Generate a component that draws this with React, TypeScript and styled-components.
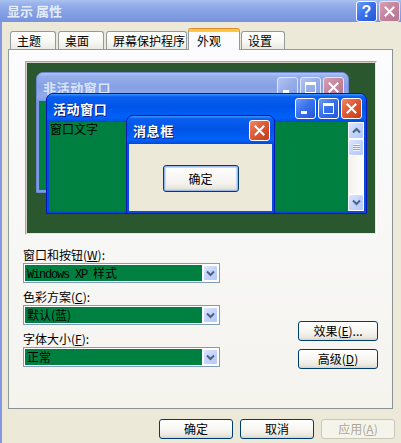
import React from 'react';
import styled, { createGlobalStyle } from 'styled-components';

const FONT = `"Noto Sans CJK SC", "Liberation Sans", sans-serif`;

const GlobalStyle = createGlobalStyle`
  html, body {
    margin: 0;
    padding: 0;
    background: #ece9d8;
    overflow: hidden;
  }
  body {
    font-family: ${FONT};
    font-size: 12px;
    color: #000;
  }
`;

type Kind = 'close' | 'min' | 'max' | 'help';

function Glyph({ kind }: { kind: Kind }) {
  if (kind === 'close')
    return (
      <svg width="13" height="13" viewBox="0 0 13 13">
        <path d="M2.5 2.5L10.5 10.5M10.5 2.5L2.5 10.5" stroke="#fff" strokeWidth="2" strokeLinecap="square" />
      </svg>
    );
  if (kind === 'min')
    return (
      <svg width="15" height="15" viewBox="0 0 15 15">
        <rect x="3" y="10" width="6" height="3" fill="#fff" />
      </svg>
    );
  if (kind === 'max')
    return (
      <svg width="15" height="15" viewBox="0 0 15 15">
        <rect x="2.5" y="2.5" width="10" height="10" fill="none" stroke="#fff" />
        <rect x="2" y="2" width="11" height="3" fill="#fff" />
      </svg>
    );
  return <HelpMark>?</HelpMark>;
}

function Chevron({ up }: { up?: boolean }) {
  return (
    <svg width="9" height="7" viewBox="0 0 9 7">
      <path
        d={up ? 'M1 5.5L4.5 2L8 5.5' : 'M1 1.5L4.5 5L8 1.5'}
        stroke="#4d6185"
        strokeWidth="2"
        fill="none"
      />
    </svg>
  );
}

function Preview() {
  return (
    <PreviewBox>
      <Win $x={9} $y={9} $w={313} $h={121}>
        <Caption>
          <CaptionText>非活动窗口</CaptionText>
          <CapButton $kind="min"><Glyph kind="min" /></CapButton>
          <CapButton $kind="max"><Glyph kind="max" /></CapButton>
          <CapButton $kind="close"><Glyph kind="close" /></CapButton>
        </Caption>
        <Client $bg="#008040" />
      </Win>

      <Win $x={19} $y={30} $w={321} $h={121} $active>
        <Caption $active>
          <CaptionText $active>活动窗口</CaptionText>
          <CapButton $kind="min" $active><Glyph kind="min" /></CapButton>
          <CapButton $kind="max" $active><Glyph kind="max" /></CapButton>
          <CapButton $kind="close" $active><Glyph kind="close" /></CapButton>
        </Caption>
        <Client $bg="#008040">
          <WindowText>窗口文字</WindowText>
          <ScrollBar>
            <ScrollBtn><Chevron up /></ScrollBtn>
            <ScrollThumb>
              <Grip />
            </ScrollThumb>
            <ScrollTrack />
            <ScrollBtn><Chevron /></ScrollBtn>
          </ScrollBar>
        </Client>
      </Win>

      <Win $x={99} $y={52} $w={149} $h={99} $active>
        <Caption $active>
          <CaptionText $active>消息框</CaptionText>
          <CapButton $kind="close" $active><Glyph kind="close" /></CapButton>
        </Caption>
        <Client $bg="#ece9d8" $center>
          <MsgButton>确定</MsgButton>
        </Client>
      </Win>
    </PreviewBox>
  );
}

function Combo({ children }: { children: React.ReactNode }) {
  return (
    <Select>
      <SelectValue>{children}</SelectValue>
      <DropBtn><Chevron /></DropBtn>
    </Select>
  );
}

export default function App() {
  return (
    <>
      <GlobalStyle />
      <Dialog>
        <TitleBar>
          <TitleText>显示 属性</TitleText>
          <TitleButtons>
            <CapButton $kind="help" $active><Glyph kind="help" /></CapButton>
            <CapButton $kind="close"><Glyph kind="close" /></CapButton>
          </TitleButtons>
        </TitleBar>

        <Body>
          <TabRow>
            <Tab $w={46}>主题</Tab>
            <Tab $w={46}>桌面</Tab>
            <Tab $w={81}>屏幕保护程序</Tab>
            <Tab $w={52} $selected>外观</Tab>
            <Tab $w={44}>设置</Tab>
          </TabRow>

          <Panel>
            <Preview />

            <Form>
              <Fields>
                <Field>
                  <Label>窗口和按钮(<u>W</u>):</Label>
                  <Combo><Latin>Windows XP </Latin>样式</Combo>
                </Field>
                <Field>
                  <Label>色彩方案(<u>C</u>):</Label>
                  <Combo>默认(蓝)</Combo>
                </Field>
                <Field>
                  <Label>字体大小(<u>F</u>):</Label>
                  <Combo>正常</Combo>
                </Field>
              </Fields>
              <SideButtons>
                <Button $w={80}>效果(<u>E</u>)...</Button>
                <Button $w={80}>高级(<u>D</u>)</Button>
              </SideButtons>
            </Form>
          </Panel>

          <Footer>
            <Button $w={74}>确定</Button>
            <Button $w={74}>取消</Button>
            <Button $w={74} disabled>应用(<u>A</u>)</Button>
          </Footer>
        </Body>
      </Dialog>
    </>
  );
}

const Dialog = styled.div`
  width: 401px;
  height: 443px;
  display: flex;
  flex-direction: column;
  background: #ece9d8;
  overflow: hidden;
`;

const TitleBar = styled.div`
  flex: none;
  height: 22px;
  display: flex;
  align-items: center;
  padding: 0 1px 0 7px;
  background: linear-gradient(#a9c2f0, #93ade9 25%, #809ce2 70%, #7893dc);
  color: #e4ecfb;
  font-weight: bold;
  font-size: 13px;
`;

const TitleText = styled.span`
  flex: 1;
  line-height: 22px;
  white-space: pre;
`;

const TitleButtons = styled.div`
  display: flex;
  gap: 2px;
`;

const HelpMark = styled.span`
  color: #fff;
  font: bold 16px "Liberation Sans", sans-serif;
  line-height: 19px;
`;

const capBg: Record<Kind, [string, string]> = {
  close: ['linear-gradient(135deg, #ef8a68, #e05a35 45%, #c33c17)', 'linear-gradient(135deg, #d6a0b4, #c4849c 50%, #b27590)'],
  min: ['linear-gradient(135deg, #6d9bf9, #3a72ee 45%, #2456d6)', 'linear-gradient(135deg, #b2c4f2, #96ade9 50%, #849ee3)'],
  max: ['linear-gradient(135deg, #6d9bf9, #3a72ee 45%, #2456d6)', 'linear-gradient(135deg, #b2c4f2, #96ade9 50%, #849ee3)'],
  help: ['linear-gradient(135deg, #6d9bf9, #3a72ee 45%, #2456d6)', 'linear-gradient(135deg, #b2c4f2, #96ade9 50%, #849ee3)'],
};

const CapButton = styled.div<{ $kind: Kind; $active?: boolean }>`
  flex: none;
  width: 21px;
  height: 21px;
  box-sizing: border-box;
  border: 1px solid ${p => (p.$active ? '#fff' : '#dfe6f8')};
  border-radius: 3px;
  display: flex;
  align-items: center;
  justify-content: center;
  background: ${p => capBg[p.$kind][p.$active ? 0 : 1]};
`;

const Body = styled.div`
  flex: 1;
  display: flex;
  flex-direction: column;
  border-left: 2px solid #8397e2;
  padding: 7px 8px 0 6px;
`;

const TabRow = styled.div`
  display: flex;
  align-items: flex-end;
  gap: 2px;
  height: 21px;
  padding-left: 2px;
  margin-bottom: -1px;
  position: relative;
  z-index: 1;
`;

const Tab = styled.div<{ $w: number; $selected?: boolean }>`
  box-sizing: border-box;
  width: ${p => p.$w}px;
  height: ${p => (p.$selected ? 21 : 18)}px;
  margin: ${p => (p.$selected ? '0 -1px' : '0 0 1px')};
  padding-left: ${p => (p.$selected ? 8 : 6)}px;
  border: 1px solid #919b9c;
  border-bottom: none;
  border-radius: 3px 3px 0 0;
  line-height: 17px;
  white-space: nowrap;
  background: ${p =>
    p.$selected ? '#fcfcfe' : 'linear-gradient(#ffffff, #f7f7f4 60%, #ebe9e0)'};
  ${p =>
    p.$selected &&
    `border-top: 3px solid #ffc83c;
     box-shadow: 0 -1px 0 #e68b2c;`}
`;

const Panel = styled.div`
  box-sizing: border-box;
  height: 360px;
  border: 1px solid #919b9c;
  border-right-color: #8a9293;
  border-bottom-color: #8a9293;
  background: linear-gradient(#fcfcfe, #f4f3ee);
  padding: 11px 14px 0;
  display: flex;
  flex-direction: column;
`;

const PreviewBox = styled.div`
  position: relative;
  flex: none;
  height: 174px;
  margin: 0 1px 0 2px;
  box-sizing: border-box;
  border: 1px solid;
  border-color: #aca899 #ffffff #ffffff #aca899;
  box-shadow: inset 1px 1px 0 #d4d0c4, inset -1px -1px 0 #e8e6dc;
  padding: 1px;
  background: #2b572f;
  background-clip: content-box;
  overflow: hidden;
`;

const Win = styled.div<{ $x: number; $y: number; $w: number; $h: number; $active?: boolean }>`
  position: absolute;
  left: ${p => p.$x + 1}px;
  top: ${p => p.$y + 1}px;
  width: ${p => p.$w}px;
  height: ${p => p.$h}px;
  box-sizing: border-box;
  display: flex;
  flex-direction: column;
  border: 1px solid ${p => (p.$active ? '#0019b0' : '#6f86d2')};
  border-radius: 7px 7px 0 0;
  background: ${p => (p.$active ? '#0a48e2' : '#7e99e1')};
  overflow: hidden;
`;

const Caption = styled.div<{ $active?: boolean }>`
  flex: none;
  height: 28px;
  display: flex;
  align-items: center;
  gap: 2px;
  padding: 0 4px 0 6px;
  background: ${p =>
    p.$active
      ? 'linear-gradient(#3d95ff, #0a5eef 10%, #0054e8 45%, #0062f8 85%, #0049dc)'
      : 'linear-gradient(#b0c6f3, #95aeea 12%, #869fe4 50%, #91abea 85%, #7e98e0)'};
`;

const CaptionText = styled.span<{ $active?: boolean }>`
  flex: 1;
  font-weight: bold;
  font-size: 13px;
  letter-spacing: 0.6px;
  color: ${p => (p.$active ? '#fff' : '#d9e3f8')};
  text-shadow: ${p => (p.$active ? '1px 1px 0 #0a1a7a' : 'none')};
  white-space: nowrap;
`;

const Client = styled.div<{ $bg: string; $center?: boolean }>`
  flex: 1;
  margin: 0 2px 2px;
  background: ${p => p.$bg};
  display: flex;
  align-items: ${p => (p.$center ? 'center' : 'stretch')};
  justify-content: ${p => (p.$center ? 'center' : 'flex-start')};
`;

const WindowText = styled.div`
  flex: 1;
  padding-left: 1px;
  line-height: 14px;
  font-size: 12px;
  color: #000;
`;

const ScrollBar = styled.div`
  width: 16px;
  display: flex;
  flex-direction: column;
  background: linear-gradient(to right, #f3f1ec, #fefefb);
`;

const ScrollBtn = styled.div`
  width: 16px;
  height: 17px;
  box-sizing: border-box;
  border: 1px solid #fff;
  border-radius: 2px;
  background: linear-gradient(135deg, #dce6fd, #c3d4fb 50%, #b4c8f6);
  display: flex;
  align-items: center;
  justify-content: center;
`;

const ScrollThumb = styled(ScrollBtn)`
  height: 17px;
`;

const Grip = styled.div`
  width: 7px;
  height: 7px;
  background: repeating-linear-gradient(#eef3fe 0 1px, #8ca3d6 1px 2px);
`;

const ScrollTrack = styled.div`
  flex: 1;
`;

const MsgButton = styled.div`
  width: 76px;
  height: 27px;
  box-sizing: border-box;
  border: 1px solid #003c74;
  border-radius: 3px;
  box-shadow: inset 0 0 0 1px #9db9eb, inset 0 0 0 2px #c6d6f4;
  background: linear-gradient(#fff, #f4f3ee 70%, #e2ded2);
  display: flex;
  align-items: center;
  justify-content: center;
  font-size: 12px;
  margin-top: 1px;
`;

const Form = styled.div`
  margin-top: 12px;
  display: grid;
  grid-template-columns: 197px 1fr;
`;

const Fields = styled.div`
  display: flex;
  flex-direction: column;
  gap: 6px;
`;

const Field = styled.div`
  display: flex;
  flex-direction: column;
`;

const Label = styled.div`
  height: 16px;
  line-height: 16px;
  font-size: 12px;
  white-space: nowrap;
`;

const Select = styled.div`
  height: 20px;
  box-sizing: border-box;
  border: 1px solid #7f9db9;
  background: #fff;
  padding: 1px;
  display: flex;
  gap: 1px;
`;

const SelectValue = styled.div`
  flex: 1;
  background: #008040;
  color: #000;
  font-size: 12px;
  line-height: 16px;
  padding-left: 2px;
  white-space: pre;
`;

const Latin = styled.span`
  font-family: "Liberation Mono", monospace;
  font-size: 12px;
  letter-spacing: -1.2px;
`;

const DropBtn = styled(ScrollBtn)`
  width: 15px;
  height: 16px;
`;

const SideButtons = styled.div`
  justify-self: end;
  align-self: end;
  display: flex;
  flex-direction: column;
  gap: 8px;
  margin-bottom: -2px;
`;

const Button = styled.button<{ $w: number }>`
  width: ${p => p.$w}px;
  height: 20px;
  box-sizing: border-box;
  padding: 0;
  border: 1px solid #003c74;
  border-radius: 3px;
  background: linear-gradient(#ffffff, #f6f5f0 55%, #ebe8df 85%, #d8d2c6);
  font-family: ${FONT};
  font-size: 12px;
  line-height: 18px;
  color: #000;
  white-space: nowrap;

  &:disabled {
    border-color: #c9c7ba;
    background: #f5f4ea;
    color: #aca899;
  }
`;

const Footer = styled.div`
  display: flex;
  justify-content: flex-end;
  gap: 7px;
  margin: 10px -2px 0 0;
`;
